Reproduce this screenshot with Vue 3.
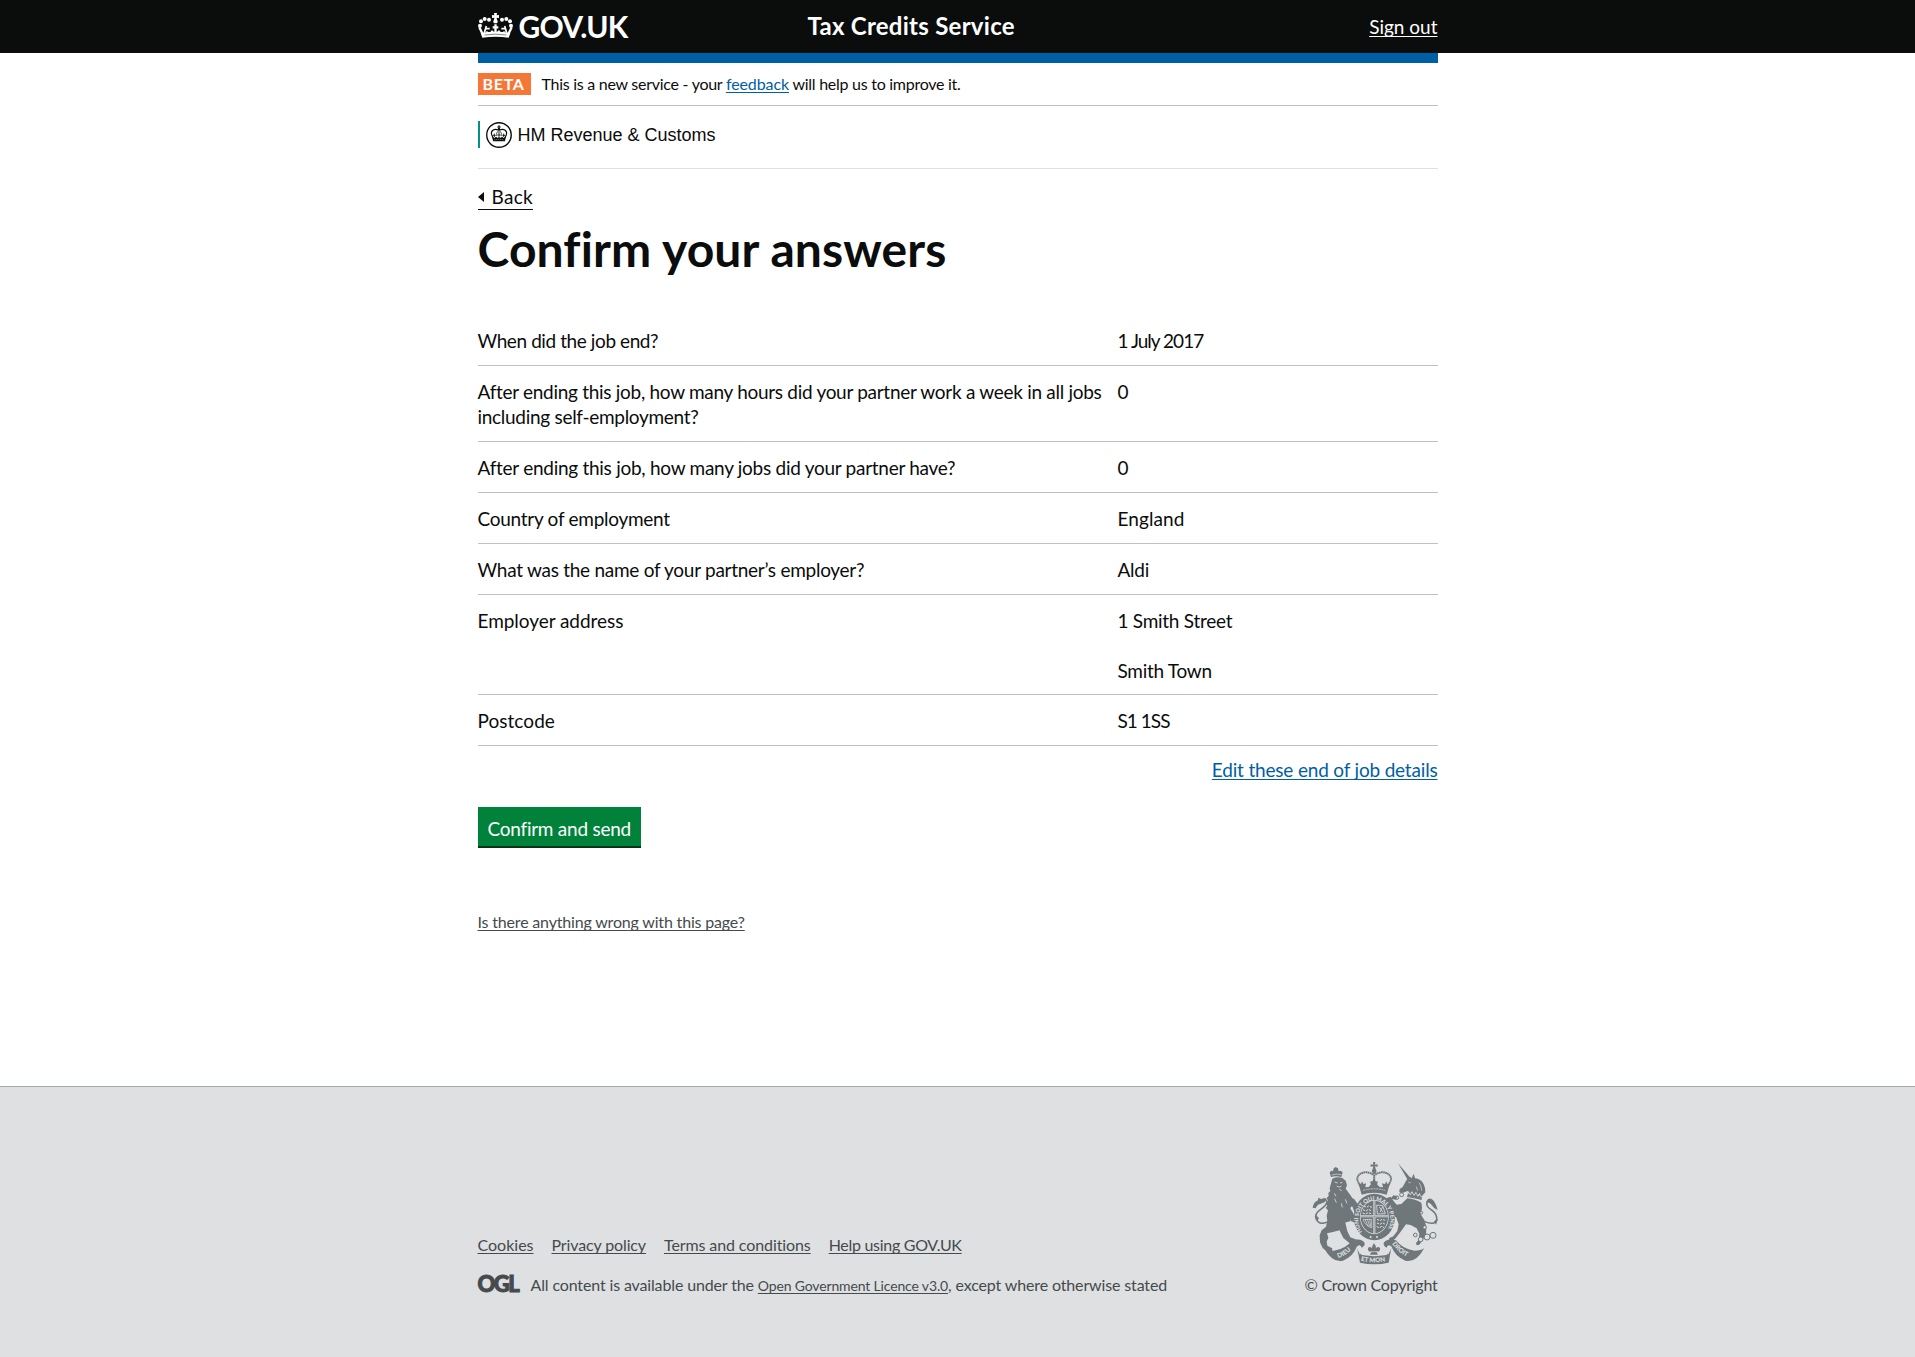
<script setup>
const answers = [
  { id: 'end', question: 'When did the job end?', lines: ['1 July 2017'] },
  {
    id: 'hours',
    question: 'After ending this job, how many hours did your partner work a week in all jobs including self-employment?',
    lines: ['0'],
  },
  { id: 'jobs', question: 'After ending this job, how many jobs did your partner have?', lines: ['0'] },
  { id: 'country', question: 'Country of employment', lines: ['England'] },
  { id: 'employer', question: 'What was the name of your partner’s employer?', lines: ['Aldi'] },
  { id: 'address', question: 'Employer address', lines: ['1 Smith Street', '', 'Smith Town'] },
  { id: 'postcode', question: 'Postcode', lines: ['S1 1SS'] },
]

const footerLinks = [
  { id: 'cookies', label: 'Cookies' },
  { id: 'privacy', label: 'Privacy policy' },
  { id: 'terms', label: 'Terms and conditions' },
  { id: 'help', label: 'Help using GOV.UK' },
]
</script>

<template>
  <div class="page">
    <header class="top">
      <div class="wrap top-inner">
        <a class="brand" href="#">
          <svg class="brand-crown" viewBox="0 0 105 75" width="35" height="25" fill="#fff">
            <circle cx="6" cy="38" r="6" /><circle cx="9" cy="25" r="6" />
            <circle cx="20" cy="18" r="6" /><circle cx="33" cy="20" r="6" />
            <circle cx="99" cy="38" r="6" /><circle cx="96" cy="25" r="6" />
            <circle cx="85" cy="18" r="6" /><circle cx="72" cy="20" r="6" />
            <path d="M48 0h9l-1 7 7-1v9l-7-1 1 7a6 6 0 0 1-1 10h-7a6 6 0 0 1-1-10l1-7-7 1V6l7 1z" />
            <g fill="none" stroke="#fff" stroke-width="5">
              <path d="M4 43l13 27M101 43L88 70" stroke-width="7" />
              <path d="M17 66l8-27M88 66l-8-27" />
              <path d="M21 47h14M84 47H70M26 55q2 8 9 8 7-1 6-10M79 55q-2 8-9 8-7-1-6-10" />
              <path d="M52.500 34v34M44 43h17" stroke-width="7" />
              <path d="M42 54l10 12 11-12" />
            </g>
            <path d="M13 74l-5-14q44-8 89 0l-5 14q-39-6-79 0z" />
            <path d="M20 66q32-5 65 0" fill="none" stroke="#0b0c0c" stroke-width="1.500" />
          </svg>
          <span class="brand-name">GOV.UK</span>
        </a>
        <span class="service">Tax Credits Service</span>
        <a class="sign-out" href="#">Sign out</a>
      </div>
    </header>

    <main class="wrap">
      <div class="bar"></div>

      <div class="phase">
        <strong class="phase-tag">BETA</strong>
        <span class="phase-text">This is a new service - your <a href="#">feedback</a> will help us to improve it.</span>
      </div>

      <div class="org">
        <div class="org-logo">
          <svg viewBox="0 0 78 78" width="26" height="26">
            <circle cx="39" cy="39" r="36.8" fill="#fff" stroke="#0b0c0c" stroke-width="4" />
            <g fill="none" stroke="#0b0c0c" stroke-width="3.4">
              <path d="M37 24C24 18 13 27 17 38l6 14M41 24c13-6 24 3 20 14l-6 14" />
              <path d="M37 27c-5 3-6 8-5 15M41 27c5 3 6 8 5 15" stroke-width="2" />
              <path d="M39 10v14M34 15h10" />
              <path d="M39 26v18M25 35v10M53 35v10M20 40h9M34 39h10M49 40h9" stroke-width="2.6" />
            </g>
            <path d="M19 44l6 4 5-4 5 4 4-4 4 4 5-4 5 4 6-4-2 14H21z" fill="#0b0c0c" />
            <circle cx="39" cy="22" r="4" fill="#0b0c0c" />
            <path d="M25 54q14-4 28 0" fill="none" stroke="#fff" stroke-width="1.6" stroke-dasharray="3 3" />
          </svg>
          <span class="org-name">HM Revenue &amp; Customs</span>
        </div>
      </div>

      <a class="back" href="#">Back</a>

      <h1>Confirm your answers</h1>

      <dl class="answers">
        <div v-for="row in answers" :key="row.id" class="answer" :class="row.id">
          <dt>{{ row.question }}</dt>
          <dd>
            <div v-for="(line, i) in row.lines" :key="i" class="line">{{ line }}</div>
          </dd>
        </div>
      </dl>

      <div class="edit"><a href="#">Edit these end of job details</a></div>

      <button class="confirm" type="button">Confirm and send</button>

      <div class="report"><a href="#">Is there anything wrong with this page?</a></div>
    </main>

    <footer class="footer">
      <div class="wrap footer-inner">
        <div class="meta">
          <nav class="links">
            <a v-for="link in footerLinks" :key="link.id" :class="link.id" href="#">{{ link.label }}</a>
          </nav>
          <div class="licence">
            <span class="ogl">OGL</span>
            <span class="licence-text">All content is available under the <a href="#">Open Government Licence v3.0</a>, except where otherwise stated</span>
          </div>
        </div>
        <div class="copyright">
          <svg class="arms" viewBox="0 0 402 336" width="134" height="112" fill="#6f777b">
            <defs>
              <path id="garter" d="M163 228A48 57 0 1 1 235 228" />
              <path id="dieu" d="M91 306Q123 296 144 264" />
              <path id="mon" d="M158 314Q198 324 242 314" />
              <path id="droit" d="M252 263Q274 296 310 307" />
            </defs>
            <!-- lion -->
            <path d="M69 63l-4-13 4-6 6 2 2-9 6-4 7 4 2 9 6-2 6 5-4 14q-16-4-31 0z" />
            <path d="M71 57q14-5 29-1" stroke="#dee0e2" stroke-width="2" fill="none" />
            <path d="M73 68q16-7 30-2l10 8 4 14-4 10 16 22 8 14-4 14-6 8 4 16-4 24-18 4-12 22-22 6-18 4 4 13-5 12 2 12 15 8-2 11-13-1-14-11-8-17-1-21 6-15 13-11 4-17-2-16 4-16-7-8 5-5-5-9 7-6-4-9 6-6-1-9 6-6-2-8z" />
            <path d="M98 178l14 22 6 26 9 18 21 8-2 10-22-1-18-15-12-24-24-2z" />
            <path d="M125 122l14 8 10 14 5 16-8 10-8-5-4-12-16-8zM120 150l14 18 10 22-6 9-10-4-2-12-12-12z" />
            <path d="M80 78l9 3M96 81l7-2M86 90q8 6 14 1M94 100l7 4M79 112l5 9M80 128l5 12M112 130l5 12M100 142l3 12" fill="none" stroke="#dee0e2" stroke-width="2.500" />
            <path d="M68 193Q36 212 25 190Q17 174 38 160Q56 148 57 137Q54 126 40 132Q30 138 24 148" fill="none" stroke="#6f777b" stroke-width="4.500" />
            <path d="M14 155q2-16 16-22l1-8 8 4 16-3-4 12-15 6q-9 2-13 13zM22 184l2-7 9 10-5 7z" />
            <!-- unicorn -->
            <path d="M270 22l37 43-8 6z" />
            <path d="M296 71l11-8 4 4 6-14 4 14q18 1 26 18 6 12 5 24l-9 10-2 12-44-8 4-19-20 8-7-4 1-9 9-6z" />
            <path d="M298 127q24 2 42 13l2 14-3 22 10 16 6 20-1 22-10 18-10 14-8 2-2-7 8-10 2-18-8-16-18-10-14-2-16 22-14 18-12 12-9-2 1-9 12-5 12-16 4-20-8-22-22-2-8 9-8-1 4-16 24-8-8-10-4-14-9 5-5-6 8-14 12-4 8 12 10 12 14-2z" />
            <path d="M248 128l8-10 12 3-4 10z" />
            <path d="M296 119l5-13 6 8 5-9 6 11 6-9 5 11 7-7 3 11 8-5-4 13q-21-8-47-11z" fill="#dee0e2" />
            <path d="M298 118l4-7 5 7 5-8 6 10 6-8 5 10 7-6 3 9 4-3-3 9q-20-8-42-10z" />
            <path d="M301 79l7 1M333 80q8 10 8 24M325 92l4 12" stroke="#dee0e2" stroke-width="2" fill="none" />
            <path d="M348 196Q388 212 386 184Q384 170 368 160Q352 150 358 136Q368 128 378 148" fill="none" stroke="#6f777b" stroke-width="4.500" />
            <path d="M355 140q2-14 14-12 12 4 20 34-12-4-18-15-6-10-16-7zM384 206l-6-10 12-8z" />
            <g fill="none" stroke="#6f777b" stroke-width="3">
              <circle cx="322" cy="237" r="5.500" /><circle cx="338" cy="250" r="7" fill="#dee0e2" />
              <circle cx="357" cy="243" r="9" /><circle cx="375" cy="238" r="9" />
              <circle cx="281" cy="116" r="6" /><circle cx="267" cy="125" r="5" />
              <circle cx="350" cy="214" r="5" fill="#dee0e2" /><circle cx="340" cy="170" r="4" fill="#dee0e2" />
            </g>
            <!-- royal crown -->
            <path d="M195 18h7l-1 8 8-1v7l-8-1 2 9h-9l2-9-8 1v-7l8 1z" />
            <circle cx="198.500" cy="45" r="7" />
            <path d="M195 56C178 42 149 50 148 68c0 10 9 20 14 30M202 56c17-14 46-6 47 12 0 10-9 20-14 30" fill="none" stroke="#6f777b" stroke-width="6" stroke-dasharray="5 1.200" />
            <path d="M198.500 50v34" fill="none" stroke="#6f777b" stroke-width="6" stroke-dasharray="5 1.200" />
            <path d="M161 116l-10-36 8 4 3-8 4 8 8-2-2 12 10-1 7-8-3-8 7-1 5-8 5 8 7 1-3 8 8 8 10 1-3-12 9 2 4-8 3 8 8-4-10 36q-38-11-75 0z" />
            <path d="M165 103q34-9 67 0" stroke="#dee0e2" stroke-width="2" stroke-dasharray="6 2" fill="none" />
            <!-- garter and shield -->
            <ellipse cx="199" cy="183" rx="62" ry="70" />
            <ellipse cx="199" cy="183" rx="43" ry="51" fill="#dee0e2" />
            <ellipse cx="199" cy="183" rx="41" ry="49" />
            <path d="M158 181h82M199 134v98" stroke="#dee0e2" stroke-width="6" />
            <path d="M158 181h82M199 134v98" stroke="#6f777b" stroke-width="1.500" />
            <g stroke="#dee0e2" stroke-width="3" fill="none">
              <path d="M168 150l8 4 6-4 10 4M165 161l9 4 7-5 11 5M164 171l8 3 8-4 12 4" stroke-dasharray="7 3" />
              <path d="M207 190l9 4 6-4 12 4M207 201l9 4 7-5 9 5M206 212l8 3 8-4 6 4" stroke-dasharray="7 3" />
              <path d="M206 147l18 2 8 24-24 1zM214 153l11 16M224 152l-8 16" stroke-width="2.500" />
              <path d="M165 191q10 22 26 24v-25zM171 190l10 21M178 189l7 22M185 190l3 22" stroke-width="2" />
            </g>
            <circle cx="188" cy="243" r="3" fill="#dee0e2" /><circle cx="207" cy="243" r="3" fill="#dee0e2" />
            <!-- motto ribbon -->
            <path d="M48 276q10 8 30 8 34-4 55-31 28-8 37 8 1 10-9 14-2-10-14-4-12 32-42 43-32 8-57-38z" />
            <path d="M349 276q-10 8-30 8-34-4-55-31-28-8-37 8-1 10 9 14 2-10 14-4 12 32 42 43 32 8 57-38z" />
            <path d="M147 275q6 22 20 23 32 5 63 0 14-1 20-23l-8 45q-44 10-86 0z" />
            <path d="M153 267q8 8 2 28M244 267q-8 8-2 28" stroke="#dee0e2" stroke-width="2" fill="none" />
            <path d="M198 262q10 12 3 20 4-12 13-8 6 8-3 13l-6-1 5 10h-24l5-10-6 1q-9-5-3-13 9-4 13 8-7-8 3-20z" />
            <path d="M188 287h21" stroke="#dee0e2" stroke-width="2" />
            <g class="motto">
              <text class="garter-text"><textPath href="#garter">HONI SOIT QUI MAL Y PENSE</textPath></text>
              <text><textPath href="#dieu">DIEU</textPath></text>
              <text><textPath href="#mon">ET MON</textPath></text>
              <text><textPath href="#droit">DROIT</textPath></text>
            </g>
          </svg>
          <span class="crown-text">© Crown Copyright</span>
        </div>
      </div>
    </footer>
  </div>
</template>

<style>
body {
  background: #fff;
}
</style>

<style scoped>
.page {
  font-family: Lato, "Noto Sans", sans-serif;
  font-size: 19px;
  line-height: 25px;
  letter-spacing: -0.27px;
  color: #0b0c0c;
  font-variant-ligatures: none;
}
.wrap {
  width: 960px;
  margin: 0 auto;
}
a {
  color: #005ea5;
  text-decoration: underline;
  text-decoration-thickness: 1px;
  text-decoration-skip-ink: none;
  text-underline-offset: 3px;
}
.top {
  background: #0b0c0c;
  height: 53px;
}
.top-inner {
  display: grid;
  grid-template-columns: 330px 1fr auto;
}
.top a {
  color: #fff;
}
.top .brand {
  display: flex;
  text-decoration: none;
}
.brand-crown {
  margin: 13px 6px 0 0;
}
.brand-name {
  font-size: 30px;
  line-height: 36px;
  margin-top: 8px;
  font-weight: 700;
  letter-spacing: -0.75px;
}
.service {
  color: #fff;
  font-size: 24px;
  line-height: 30px;
  margin-top: 11px;
  font-weight: 700;
  letter-spacing: 0.26px;
}
.sign-out {
  margin-top: 14px;
  letter-spacing: 0;
  text-underline-offset: 2px;
}
.bar {
  height: 10px;
  background: #005ea5;
}
.phase {
  display: flex;
  gap: 11px;
  height: 32px;
  padding-top: 10px;
  border-bottom: 1px solid #bfc1c3;
  font-size: 16px;
  line-height: 22px;
}
.phase a {
  text-underline-offset: 2px;
  letter-spacing: -0.1px;
}
.phase-tag {
  width: 53px;
  height: 22px;
  box-sizing: border-box;
  padding-left: 5px;
  background: #f47738;
  color: #fff;
  letter-spacing: 0.7px;
}
.phase-text {
  letter-spacing: -0.27px;
}
.org {
  height: 47px;
  padding-top: 15px;
  border-bottom: 1px solid #dee0e2;
}
.org-logo {
  display: flex;
  align-items: flex-start;
  height: 27px;
  padding-left: 6px;
  border-left: 2px solid #00918b;
  font: 18px/27px "Liberation Sans", Arial, sans-serif;
  letter-spacing: 0;
}
.org-logo svg {
  margin: 1px 6px 0 0;
}
.org-name {
  padding-top: 1px;
}
.back {
  display: block;
  position: relative;
  width: 41px;
  margin-top: 15px;
  padding-left: 14px;
  border-bottom: 1px solid #0b0c0c;
  color: #0b0c0c;
  text-decoration: none;
  letter-spacing: 0.3px;
}
.back::before {
  content: "";
  position: absolute;
  left: 0;
  top: 8px;
  border: 5px solid transparent;
  border-left: 0;
  border-right: 6px solid #0b0c0c;
}
h1 {
  margin: 14px 0 41px;
  font-size: 48px;
  line-height: 50px;
  font-weight: 700;
  letter-spacing: 0.13px;
}
.answers {
  margin: 0;
}
.answer {
  display: grid;
  grid-template-columns: 640px 1fr;
  padding: 13px 0 12px;
  border-bottom: 1px solid #bfc1c3;
}
.answer.address {
  padding-bottom: 11px;
}
.answer dt {
  padding-right: 10px;
}
.answer dd {
  margin: 0;
}
.line {
  height: 25px;
}
.end dt {
  letter-spacing: -0.41px;
}
.hours dt {
  letter-spacing: -0.29px;
}
.address dt {
  letter-spacing: -0.05px;
}
.postcode dt {
  letter-spacing: 0.05px;
}
.end dd,
.postcode dd {
  letter-spacing: -0.97px;
}
.country dd {
  letter-spacing: 0.09px;
}
.edit {
  margin-top: 11px;
  text-align: right;
  letter-spacing: -0.18px;
}
.edit a {
  text-underline-offset: 2px;
}
.confirm {
  display: block;
  width: 163px;
  height: 41px;
  margin: 25px 0 0;
  padding: 9px 10px 5px;
  border: 0;
  border-bottom: 2px solid #003618;
  background: #00823b;
  color: #fff;
  font: inherit;
  letter-spacing: -0.25px;
  white-space: nowrap;
}
.report {
  margin: 64px 0 154px;
  font-size: 16px;
  line-height: 20px;
  letter-spacing: -0.175px;
}
.report a,
.footer a {
  color: #454a4c;
  text-underline-offset: 2px;
}
.footer {
  height: 270px;
  border-top: 1px solid #a1acb2;
  background: #dee0e2;
  color: #454a4c;
  font-size: 16px;
  line-height: 20px;
}
.footer-inner {
  display: flex;
  justify-content: space-between;
}
.meta {
  padding-top: 148px;
}
.links {
  display: flex;
  gap: 18px;
  margin-bottom: 20px;
}
.cookies {
  letter-spacing: 0;
}
.privacy {
  letter-spacing: -0.13px;
}
.terms {
  letter-spacing: -0.1px;
}
.help {
  letter-spacing: -0.29px;
}
.licence {
  display: flex;
  white-space: nowrap;
}
.ogl {
  width: 53px;
  font-size: 22px;
  line-height: 20px;
  margin-top: -1px;
  font-weight: 900;
  letter-spacing: -1.5px;
  -webkit-text-stroke: 1px #454a4c;
}
.licence-text {
  letter-spacing: -0.14px;
}
.licence-text a {
  font-size: 14px;
  letter-spacing: -0.15px;
}
.copyright {
  display: flex;
  flex-direction: column;
  align-items: flex-end;
  padding-top: 69px;
}
.arms {
  margin: 0 -4px 7px 0;
}
.motto {
  font-size: 19px;
  font-weight: 900;
  letter-spacing: 0;
  fill: #dee0e2;
}
.garter-text {
  font-size: 17px;
}
.crown-text {
  letter-spacing: -0.25px;
}
</style>
